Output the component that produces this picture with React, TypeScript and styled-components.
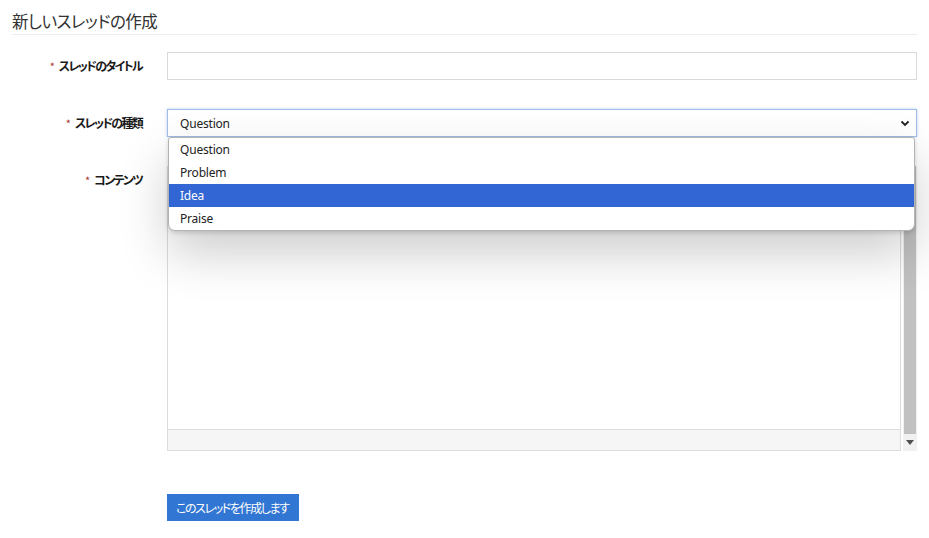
import React from "react";
import styled, { createGlobalStyle } from "styled-components";

const GlobalStyle = createGlobalStyle`
  html, body {
    margin: 0;
    padding: 0;
    background: #fff;
  }
  body {
    font-family: "Noto Sans", "Noto Sans CJK JP", sans-serif;
    color: #222;
  }
`;

const Page = styled.div`
  padding: 9px 12px 20px 12px;
`;

const Heading = styled.h1`
  margin: 0;
  font-family: "Noto Sans CJK JP", sans-serif;
  font-feature-settings: "palt";
  font-weight: 400;
  font-size: 16.5px;
  letter-spacing: -0.5px;
  line-height: 24px;
  color: #333;
  padding-bottom: 1px;
  border-bottom: 1px solid #ececec;
`;

const Form = styled.form`
  display: grid;
  grid-template-columns: 131px 1fr;
  column-gap: 24px;
  row-gap: 29px;
  margin-top: 17px;
  align-items: start;
`;

const Label = styled.label`
  text-align: right;
  font-family: "Noto Sans CJK JP", sans-serif;
  font-feature-settings: "palt";
  font-weight: 700;
  font-size: 12px;
  letter-spacing: -1.7px;
  line-height: 28px;
  color: #1a1a1a;
  white-space: nowrap;
  padding-right: 1px;
`;

const Star = styled.span`
  color: #a33;
  font-weight: 400;
  font-size: 11px;
  letter-spacing: 0;
  margin-right: 4px;
`;

const TextInput = styled.div`
  height: 26px;
  border: 1px solid #d9d9d9;
  background: #fff;
`;

const SelectWrap = styled.div`
  position: relative;
`;

const SelectBox = styled.div`
  height: 26px;
  border: 1px solid #9fbde6;
  box-shadow: 0 0 3px rgba(110, 155, 220, 0.45);
  display: flex;
  align-items: center;
  justify-content: space-between;
  padding: 0 6px 0 12px;
  font-size: 12px;
  letter-spacing: -0.2px;
  color: #222;
`;

const Chevron = styled.svg`
  width: 10px;
  height: 8px;
`;

const Menu = styled.ul`
  position: absolute;
  top: 28px;
  left: 1px;
  right: 2px;
  margin: 0;
  padding: 0;
  list-style: none;
  background: #fff;
  border: 1px solid #b4b4b4;
  border-radius: 3px 3px 7px 7px;
  box-shadow: 0 22px 50px rgba(0, 0, 0, 0.2), 0 2px 4px rgba(0, 0, 0, 0.14);
  z-index: 5;
  overflow: hidden;
`;

const Option = styled.li<{ $active?: boolean }>`
  height: 23px;
  line-height: 23px;
  padding-left: 11px;
  font-size: 12px;
  letter-spacing: -0.2px;
  color: ${(p) => (p.$active ? "#fff" : "#222")};
  background: ${(p) => (p.$active ? "#3166d4" : "transparent")};
`;

const ContentBox = styled.div`
  display: flex;
  height: 285px;
`;

const Editor = styled.div`
  flex: 1;
  display: flex;
  flex-direction: column;
  border: 1px solid #dcdcdc;
`;

const EditorBody = styled.div`
  flex: 1;
  background: #fff;
`;

const EditorFooter = styled.div`
  height: 20px;
  background: #f6f6f6;
  border-top: 1px solid #dcdcdc;
`;

const ScrollBar = styled.div`
  width: 14px;
  margin-left: 2px;
  display: flex;
  flex-direction: column;
  background: #f1f1f1;
  padding: 0 1px;
  box-sizing: border-box;
`;

const Thumb = styled.div`
  flex: 1;
  background: #c1c1c1;
`;

const Arrow = styled.div`
  height: 17px;
  display: flex;
  align-items: center;
  justify-content: center;
`;

const ButtonRow = styled.div`
  grid-column: 2;
  margin-top: 14px;
`;

const SubmitButton = styled.button`
  height: 27px;
  border: none;
  background: #3276d3;
  color: #fff;
  font-family: "Noto Sans CJK JP", sans-serif;
  font-feature-settings: "palt";
  font-size: 12px;
  letter-spacing: -1.4px;
  padding: 0 10px 0 9px;
  cursor: pointer;
`;

const options = ["Question", "Problem", "Idea", "Praise"];

export default function App() {
  return (
    <>
      <GlobalStyle />
      <Page>
        <Heading>新しいスレッドの作成</Heading>
        <Form>
          <Label>
            <Star>*</Star>スレッドのタイトル
          </Label>
          <TextInput />

          <Label>
            <Star>*</Star>スレッドの種類
          </Label>
          <SelectWrap>
            <SelectBox>
              <span>Question</span>
              <Chevron viewBox="0 0 10 8">
                <path d="M1.5 2.5 L5 6 L8.5 2.5" fill="none" stroke="#222" strokeWidth="1.8" />
              </Chevron>
            </SelectBox>
            <Menu>
              {options.map((o) => (
                <Option key={o} $active={o === "Idea"}>
                  {o}
                </Option>
              ))}
            </Menu>
          </SelectWrap>

          <Label>
            <Star>*</Star>コンテンツ
          </Label>
          <ContentBox>
            <Editor>
              <EditorBody />
              <EditorFooter />
            </Editor>
            <ScrollBar>
              <Thumb />
              <Arrow>
                <svg width="8" height="5" viewBox="0 0 8 5">
                  <path d="M0 0 H8 L4 5 Z" fill="#505050" />
                </svg>
              </Arrow>
            </ScrollBar>
          </ContentBox>

          <ButtonRow>
            <SubmitButton type="button">このスレッドを作成します</SubmitButton>
          </ButtonRow>
        </Form>
      </Page>
    </>
  );
}
